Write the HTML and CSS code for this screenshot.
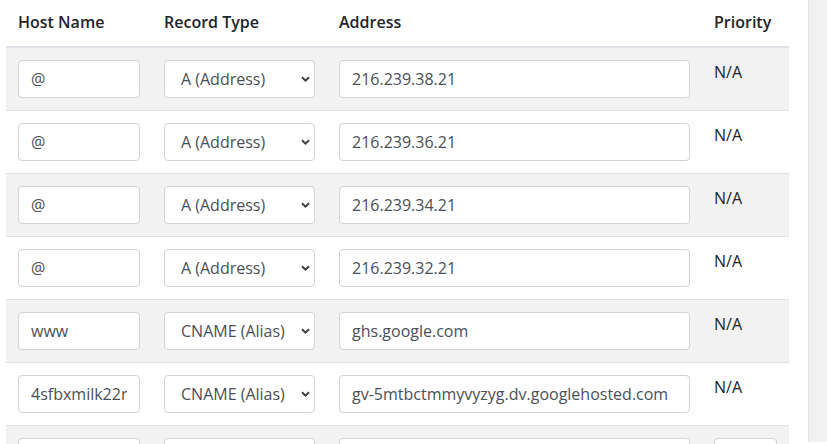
FILE: index.html
```html
<!DOCTYPE html>
<html>
<head>
<meta charset="utf-8">
<link rel="stylesheet" href="styles.css">
</head>
<body>
<div class="page">
  <div class="content">
    <table class="dns">
      <colgroup>
        <col class="c1"><col class="c2"><col class="c3"><col class="c4">
      </colgroup>
      <thead>
        <tr><th>Host Name</th><th>Record Type</th><th>Address</th><th>Priority</th></tr>
      </thead>
      <tbody>
        <tr class="odd">
          <td><input class="fc host" value="@"></td>
          <td><div class="sel"><select class="fc"><option>A (Address)</option></select><svg class="chev" width="9" height="6" viewBox="0 0 9 6"><path d="M1 1.2 L4.5 4.6 L8 1.2" fill="none" stroke="#3c4146" stroke-width="2"/></svg></div></td>
          <td><input class="fc" value="216.239.38.21"></td>
          <td class="pri">N/A</td>
        </tr>
        <tr>
          <td><input class="fc host" value="@"></td>
          <td><div class="sel"><select class="fc"><option>A (Address)</option></select><svg class="chev" width="9" height="6" viewBox="0 0 9 6"><path d="M1 1.2 L4.5 4.6 L8 1.2" fill="none" stroke="#3c4146" stroke-width="2"/></svg></div></td>
          <td><input class="fc" value="216.239.36.21"></td>
          <td class="pri">N/A</td>
        </tr>
        <tr class="odd">
          <td><input class="fc host" value="@"></td>
          <td><div class="sel"><select class="fc"><option>A (Address)</option></select><svg class="chev" width="9" height="6" viewBox="0 0 9 6"><path d="M1 1.2 L4.5 4.6 L8 1.2" fill="none" stroke="#3c4146" stroke-width="2"/></svg></div></td>
          <td><input class="fc" value="216.239.34.21"></td>
          <td class="pri">N/A</td>
        </tr>
        <tr>
          <td><input class="fc host" value="@"></td>
          <td><div class="sel"><select class="fc"><option>A (Address)</option></select><svg class="chev" width="9" height="6" viewBox="0 0 9 6"><path d="M1 1.2 L4.5 4.6 L8 1.2" fill="none" stroke="#3c4146" stroke-width="2"/></svg></div></td>
          <td><input class="fc" value="216.239.32.21"></td>
          <td class="pri">N/A</td>
        </tr>
        <tr class="odd">
          <td><input class="fc host" value="www"></td>
          <td><div class="sel"><select class="fc"><option>CNAME (Alias)</option></select><svg class="chev" width="9" height="6" viewBox="0 0 9 6"><path d="M1 1.2 L4.5 4.6 L8 1.2" fill="none" stroke="#3c4146" stroke-width="2"/></svg></div></td>
          <td><input class="fc" value="ghs.google.com"></td>
          <td class="pri">N/A</td>
        </tr>
        <tr>
          <td><input class="fc host" value="4sfbxmilk22r"></td>
          <td><div class="sel"><select class="fc"><option>CNAME (Alias)</option></select><svg class="chev" width="9" height="6" viewBox="0 0 9 6"><path d="M1 1.2 L4.5 4.6 L8 1.2" fill="none" stroke="#3c4146" stroke-width="2"/></svg></div></td>
          <td><input class="fc" value="gv-5mtbctmmyvyzyg.dv.googlehosted.com"></td>
          <td class="pri">N/A</td>
        </tr>
        <tr class="odd">
          <td><input class="fc host" value=""></td>
          <td><div class="sel"><select class="fc"><option>MX (Mail)</option></select><svg class="chev" width="9" height="6" viewBox="0 0 9 6"><path d="M1 1.2 L4.5 4.6 L8 1.2" fill="none" stroke="#3c4146" stroke-width="2"/></svg></div></td>
          <td><input class="fc" value=""></td>
          <td><input class="fc prio" value=""></td>
        </tr>
      </tbody>
    </table>
  </div>
  <div class="scrollbar"></div>
</div>
</body>
</html>
```

FILE: styles.css
```css
html, body {
  margin: 0;
  padding: 0;
  height: 444px;
  overflow: hidden;
  background: #fff;
}
body {
  font-family: "Open Sans", "Liberation Sans", sans-serif;
  font-size: 16px;
  line-height: 24px;
  color: #212529;
}
.page {
  display: flex;
  height: 444px;
  margin-top: -2px;
}
.content {
  flex: 1;
  padding-left: 6px;
}
.scrollbar {
  width: 18px;
  border-left: 1px solid #e2e2e2;
  background: #f1f1f1;
  margin-top: 2px;
}
.dns {
  width: 783px;
  border-collapse: collapse;
  table-layout: fixed;
}
.c1 { width: 146px; }
.c2 { width: 175px; }
.c3 { width: 375px; }
.c4 { width: 87px; }
.dns th {
  text-align: left;
  font-weight: 600;
  padding: 12px;
  border-bottom: 2px solid #dee2e6;
  vertical-align: bottom;
}
.dns td {
  padding: 12px;
  border-top: 1px solid #dee2e6;
  vertical-align: top;
}
.dns tbody tr:first-child td {
  border-top: 0;
}
.dns tr.odd td {
  background: #f2f2f2;
}
.fc {
  display: block;
  box-sizing: border-box;
  width: 100%;
  height: 38px;
  margin: 0;
  padding: 6px 12px;
  font-family: "Open Sans", "Liberation Sans", sans-serif;
  font-size: 16px;
  line-height: 24px;
  color: #495057;
  background: #fff;
  border: 1px solid #ced4da;
  border-radius: 4px;
  outline: none;
}
.sel {
  position: relative;
}
.sel select {
  -webkit-appearance: none;
  appearance: none;
  padding-left: 16px;
  padding-right: 24px;
}
.chev {
  position: absolute;
  right: 5px;
  top: 16px;
}
.prio {
  width: 63px;
}
```
